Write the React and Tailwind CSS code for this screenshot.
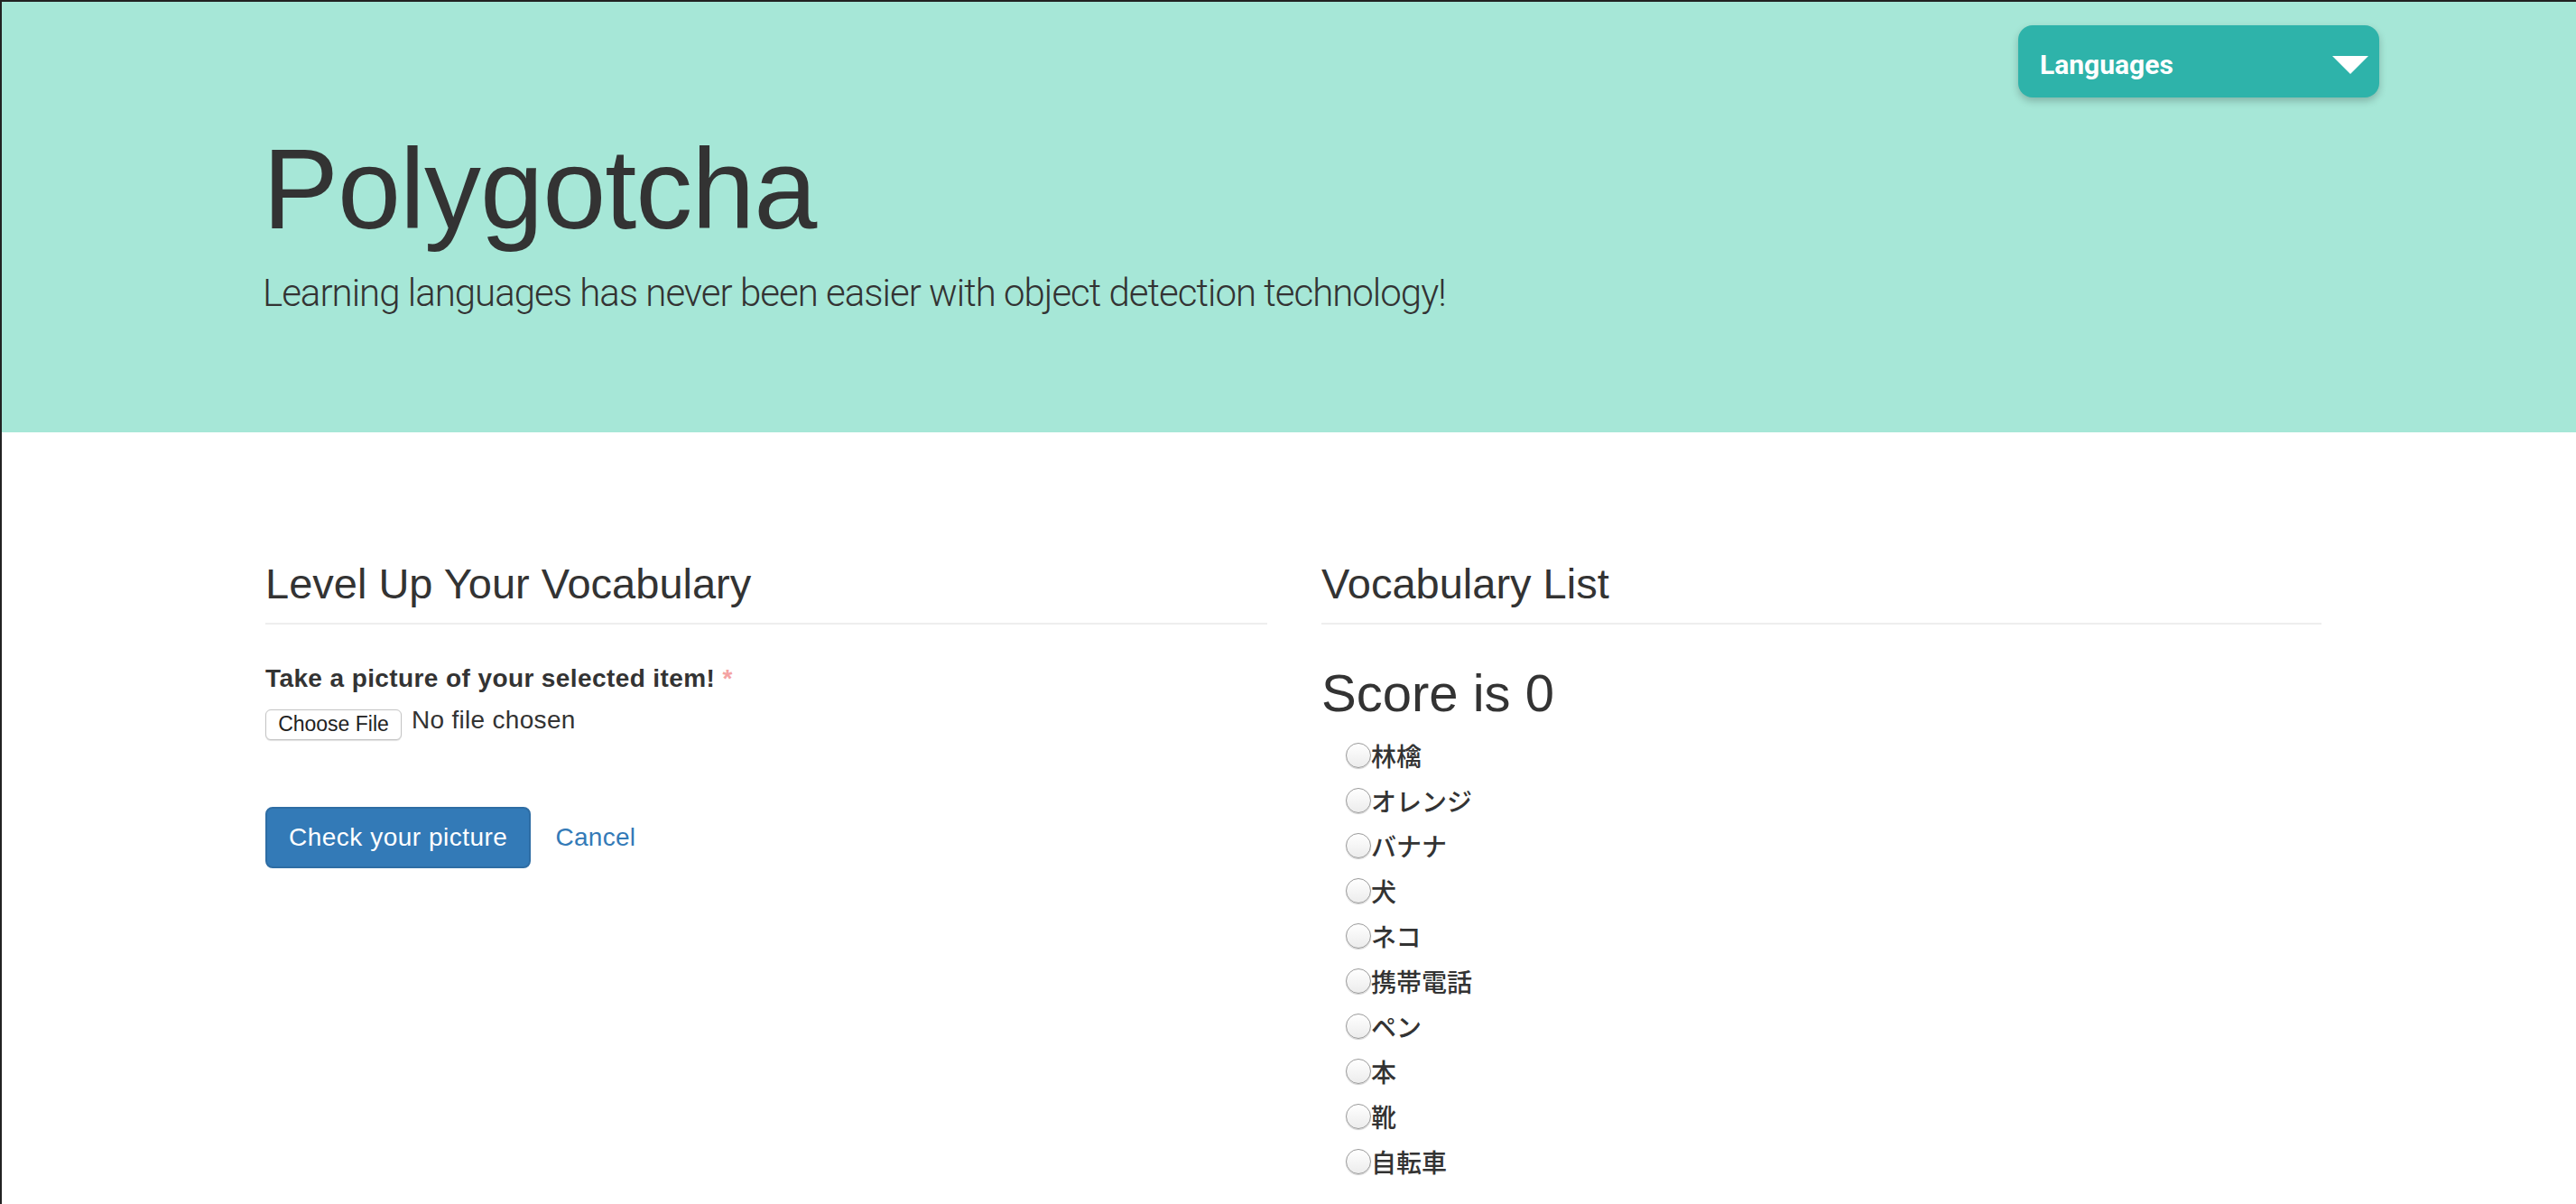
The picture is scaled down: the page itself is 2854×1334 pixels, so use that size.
import { useState } from "react";

const words = ["林檎", "オレンジ", "バナナ", "犬", "ネコ", "携帯電話", "ペン", "本", "靴", "自転車"];

function Radio({ checked }) {
  return (
    <span
      className={`inline-block w-[28px] h-[28px] rounded-full border border-[#9a9a9a] bg-gradient-to-b from-white to-[#ececec] shadow-[0_1px_1px_rgba(0,0,0,0.2)] shrink-0 ${
        checked ? "ring-4 ring-inset ring-[#337ab7]" : ""
      }`}
    />
  );
}

export default function App() {
  const [picked, setPicked] = useState(null);

  return (
    <div className="min-h-screen w-full bg-white border-t-2 border-l-2 border-[#222] text-[#333] font-['Liberation_Sans',Arial,sans-serif]">
      {/* Jumbotron */}
      <header className="relative h-[477px] bg-[#a6e7d7] pt-[139px] pl-[289px]">
        <button className="absolute top-[26px] right-[218px] w-[400px] h-[80px] flex items-center justify-between pl-[24px] pr-[12px] rounded-[16px] bg-[#2eb3aa] text-white shadow-[0_4px_8px_rgba(0,0,0,0.22)] font-['Roboto',sans-serif] font-bold text-[30px]">
          <span className="mt-[6px]">Languages</span>
          <svg width="40" height="20" viewBox="0 0 40 20" className="mt-[8px]">
            <polygon points="0,0 40,0 20,20" fill="white" />
          </svg>
        </button>
        <h1 className="text-[126px] leading-[1.1] font-normal tracking-[-1px]">Polygotcha</h1>
        <p className="mt-[16px] text-[42px] leading-[1.4] font-light tracking-[-1px] font-['Roboto',sans-serif]">
          Learning languages has never been easier with object detection technology!
        </p>
      </header>

      {/* Content */}
      <main className="flex gap-[60px] pl-[292px] pt-[142px]">
        <section className="w-[1110px]">
          <h3 className="text-[47px] leading-[1.1] pb-[17px] border-b-2 border-[#eee]">Level Up Your Vocabulary</h3>
          <label className="block mt-[40px] text-[28px] leading-[40px] font-bold tracking-[0.4px]">
            Take a picture of your selected item! <span className="text-[#f4a3a3]">*</span>
          </label>
          <div className="mt-[6px] flex items-start text-[28px] leading-[40px] tracking-[0.3px]">
            <span className="mt-[8px] w-[151px] h-[34px] flex items-center justify-center rounded-[6px] border border-[#c4c4c4] bg-white shadow-[0_1px_1px_rgba(0,0,0,0.12)] text-[23px] leading-none text-[#222] tracking-normal">
              Choose File
            </span>
            <span className="ml-[11px]">No file chosen</span>
          </div>
          <div className="mt-[74px] flex items-center gap-[27px]">
            <button className="h-[68px] px-[24px] rounded-[8px] bg-[#337ab7] border-2 border-[#2e6da4] text-white text-[28px] leading-[40px] tracking-[0.5px]">
              Check your picture
            </button>
            <a href="#" className="text-[28px] leading-[40px] text-[#337ab7] tracking-[0.3px]">
              Cancel
            </a>
          </div>
        </section>

        <section className="w-[1108px]">
          <h3 className="text-[47px] leading-[1.1] pb-[17px] border-b-2 border-[#eee]">Vocabulary List</h3>
          <h2 className="mt-[44px] text-[58px] leading-[1.1]">Score is 0</h2>
          <ul className="mt-[13px] pl-[27px]">
            {words.map((w, i) => (
              <li
                key={w}
                onClick={() => setPicked(i)}
                className="h-[50px] flex items-center text-[28px] font-medium font-['Noto_Sans_CJK_JP',sans-serif] cursor-pointer"
              >
                <Radio checked={picked === i} />
                <span>{w}</span>
              </li>
            ))}
          </ul>
        </section>
      </main>
    </div>
  );
}
